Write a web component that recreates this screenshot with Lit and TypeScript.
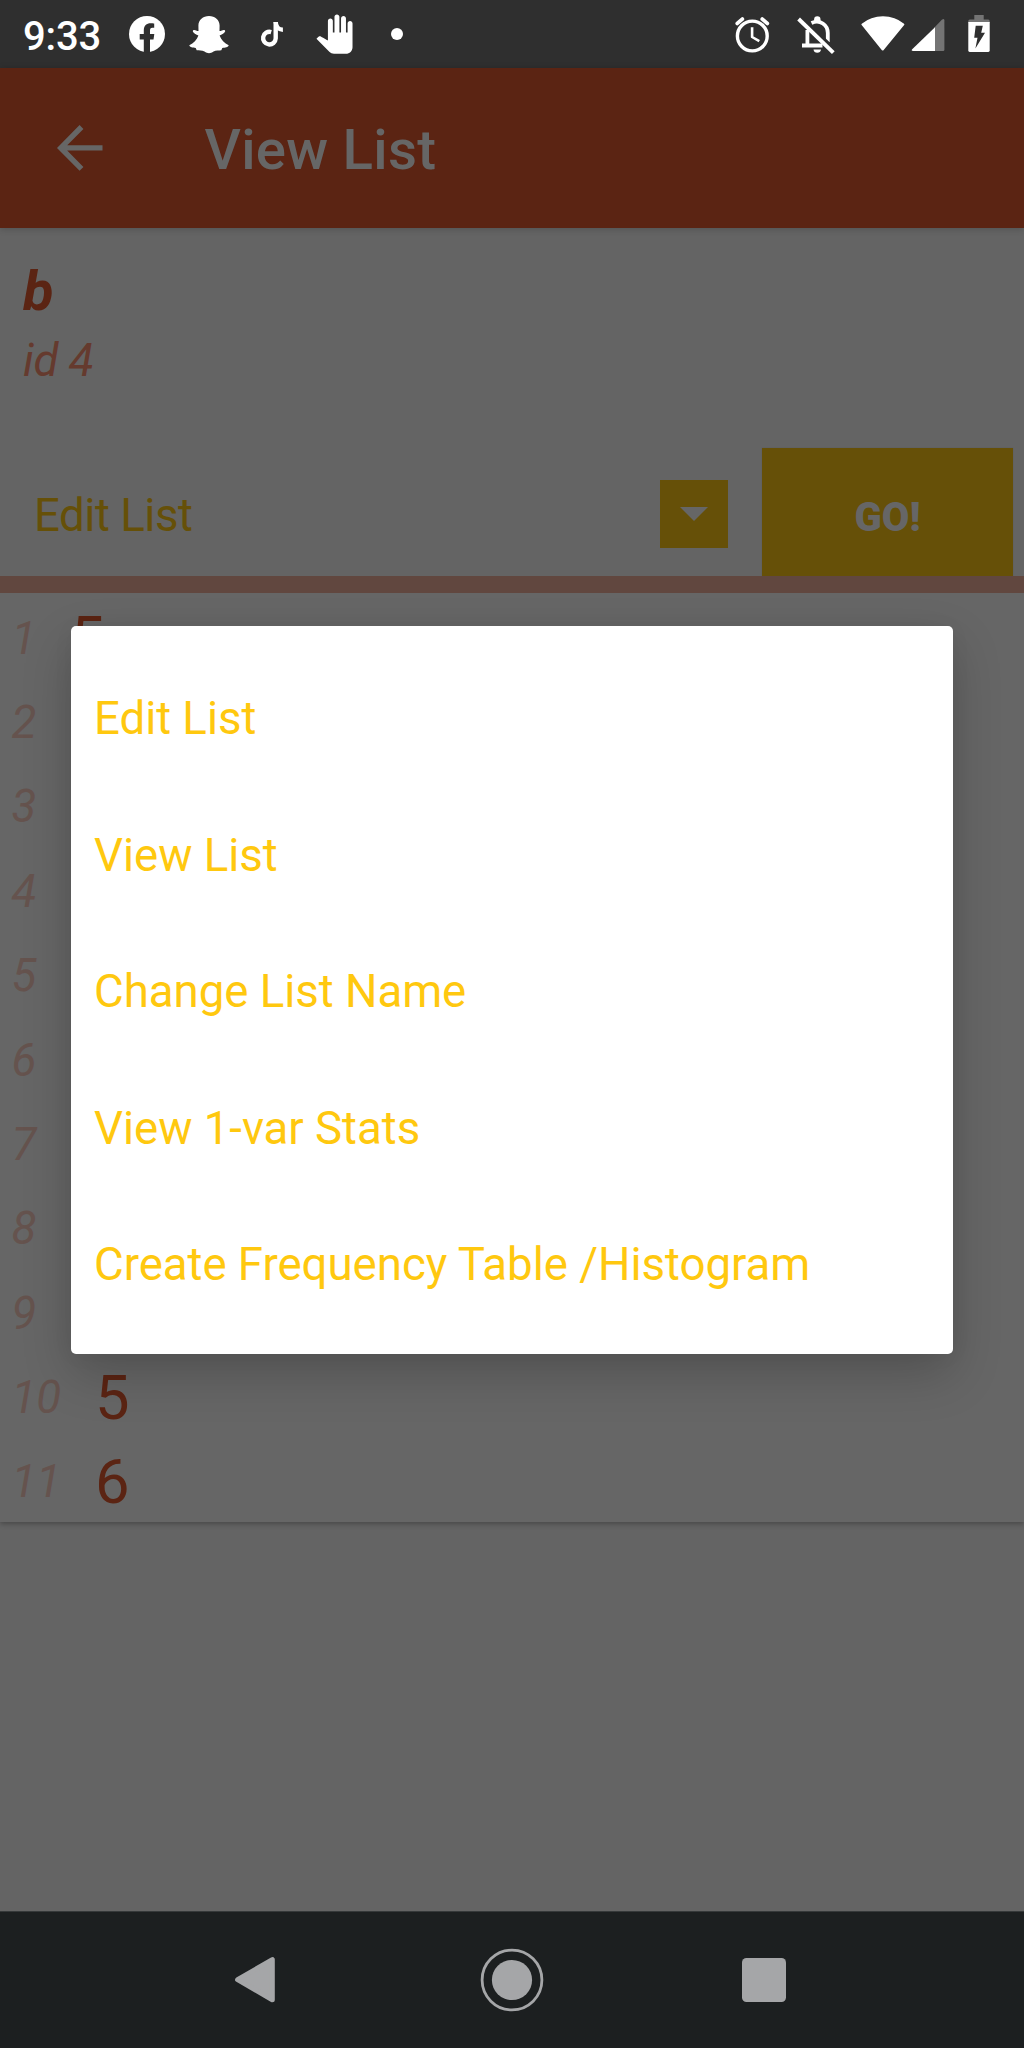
import { LitElement, html, css, svg } from "lit";
import { customElement, property } from "lit/decorators.js";

const glyphs = {
  facebook: svg`<circle r="18" fill="#fff"/><path fill="#2f2f2f" d="M-3.2 18.5V5.4H-7.3V0H-3.2V-3.5C-3.2-8.2-.4-10.7 3.6-10.7C5-10.7 6.4-10.5 7.2-10.4V-6.2H5.4C3.4-6.2 3-4.9 3-3.5V0H7.3L6.5 5.4H3V18.5Z"/>`,
  snapchat: svg`<path fill="#fff" d="M0-18C6-18 10.6-14 10.6-8.5L10.5-3C12.5-2.8 14-4.8 15.8-3.8C17-2.5 15.5-1 10.6 1.6C12 6 15.5 9.3 19.7 11.2C19.2 13.2 16 13.5 13.3 14L12.3 16.2C10 16.6 7 15.8 4.5 17.5C3 18.8 1.5 19.2 0 19.2C-1.5 19.2-3 18.8-4.5 17.5C-7 15.8-10 16.6-12.3 16.2L-13.3 14C-16 13.5-19.2 13.2-19.7 11.2C-15.5 9.3-12 6-10.6 1.6C-15.5-1-17-2.5-15.8-3.8C-14-4.8-12.5-2.8-10.5-3L-10.6-8.5C-10.6-14-6-18 0-18Z"/>`,
  tiktok: svg`<g fill="none" stroke="#fff" stroke-width="4.4"><path d="M-.8-1.9A6.3 6.3 0 1 0 3.7 4.4V-12"/><path d="M3.7-12C3.9-7.2 7.2-4.2 10.9-4.2"/></g>`,
  hand: svg`<path fill="#fff" transform="translate(-19.2 -19.6) scale(1.64)" d="M23 5.5V20c0 2.2-1.8 4-4 4h-7.3c-1.08 0-2.1-.43-2.85-1.19L1 14.83s1.26-1.23 1.3-1.25c.22-.19.49-.29.79-.29.22 0 .42.06.6.16.04.01 4.31 2.46 4.31 2.46V4c0-.83.67-1.5 1.5-1.5S11 3.17 11 4v7h1V1.5c0-.83.67-1.5 1.5-1.5S15 .67 15 1.5V11h1V2.5c0-.83.67-1.5 1.5-1.5s1.5.67 1.5 1.5V11h1V5.5c0-.83.67-1.5 1.5-1.5s1.5.67 1.5 1.5z"/>`,
  dot: svg`<circle r="6" fill="#fff"/>`,
  alarm: svg`<g fill="none" stroke="#fff" stroke-width="3.4"><circle cx="0.3" cy="2" r="14.9"/><path stroke-width="2.6" stroke-linejoin="round" d="M.1-6.7V3L7.3 7.2"/><path stroke-width="3.8" stroke-linecap="round" d="M-14.7-10.6L-9.7-14.9M15.3-10.6L10.3-14.9"/></g>`,
  bell: svg`<g fill="none" stroke="#fff" stroke-width="3.8"><path d="M-8.6-4V11.5M-14 11.5H6.5M-4.5-11C4-15 11.8-9 11.8-1V8"/><path stroke="#2f2f2f" stroke-width="3" d="M-15-17.5L19 15.5"/><path stroke-width="3.9" d="M-17.4-15L17.3 18.7"/></g><circle cx="1.3" cy="-14.6" r="3.2" fill="#fff"/><path fill="#fff" d="M-2.5 15.5H5A3.8 3.8 0 0 1-2.5 15.5Z"/>`,
  wifi: svg`<path fill="#fff" stroke="#fff" stroke-width="2" stroke-linejoin="round" d="M-.3 15.5L-20.6-9.6C-9-19.3 9-19.3 20.4-9.6Z"/>`,
  signal: svg`<path fill="#747474" d="M16.4 15.8Q16.4 17 15.2 17H6V-6L13.8-14.2Q16.4-16.2 16.4-13.5Z"/><path fill="#fff" d="M7-6.8V17H-14.9Q-17.2 17-15.8 15.3Z"/>`,
  battery: svg`<path fill="#747474" d="M-4.7-19H4.7V-14.5H9.2Q10.7-14.5 10.7-13V-11H-10.7V-13Q-10.7-14.5-9.2-14.5H-4.7Z"/><path fill="#fff" d="M-10.7-12H10.7V16.6Q10.7 18 9.3 18H-9.3Q-10.7 18-10.7 16.6Z"/><path fill="#2f2f2f" d="M-3.3-8.3H3.8L2.2-1.3H6L-3.6 14.6L-1.5 3.7H-4.8Z"/>`,
};

type GlyphName = keyof typeof glyphs;

@customElement("status-glyph")
class StatusGlyph extends LitElement {
  @property() name: GlyphName = "dot";

  static styles = css`
    :host { display: block; width: 48px; height: 48px; }
    .glyph { display: block; }
  `;

  render() {
    return html`<svg class="glyph" width="48" height="48" viewBox="-24 -24 48 48">${glyphs[this.name]}</svg>`;
  }
}

@customElement("option-menu")
class OptionMenu extends LitElement {
  @property({ attribute: false }) options: string[] = [];

  static styles = css`
    :host { display: block; }
    .menu {
      box-sizing: border-box;
      height: 728.3px;
      padding: 22.5px 0;
      border-radius: 5px;
      background: #fff;
      box-shadow: 0 20px 50px rgba(0, 0, 0, .2), 0 2px 22px rgba(0, 0, 0, .04);
    }
    .option {
      box-sizing: border-box;
      height: 136.5px;
      padding: 5px 0 0 23px;
      line-height: 132.5px;
      font-size: 45.6px;
      letter-spacing: -.03px;
      white-space: nowrap;
      color: #ffc80f;
    }
  `;

  render() {
    return html`<div class="menu" role="listbox">
      ${this.options.map((o) => html`<div class="option" role="option">${o}</div>`)}
    </div>`;
  }
}

@customElement("app-root")
class AppRoot extends LitElement {
  // Rows covered by the open menu carry no value.
  private values: (number | null)[] = [5, null, null, null, null, null, null, null, null, 5, 6];
  private options = [
    "Edit List",
    "View List",
    "Change List Name",
    "View 1-var Stats",
    "Create Frequency Table /Histogram",
  ];

  static styles = css`
    :host {
      display: block;
      font-family: Roboto, "Liberation Sans", sans-serif;
    }
    .screen {
      position: relative;
      display: flex;
      flex-direction: column;
      width: 1024px;
      height: 2048px;
      overflow: hidden;
      background: #646464;
    }
    .status {
      flex: none;
      display: flex;
      justify-content: space-between;
      align-items: center;
      height: 68px;
      padding: 0 21px 0 23px;
      box-sizing: border-box;
      background: #2f2f2f;
    }
    .left, .right { display: flex; align-items: center; }
    .time {
      width: 92.5px;
      padding-top: 5px;
      font-size: 40px;
      line-height: 64px;
      font-weight: 500;
      letter-spacing: -.2px;
      color: #fff;
    }
    .slot { display: flex; justify-content: center; width: 62.5px; }
    .right { gap: 16px; }
    .tight { margin-left: -18.5px; }
    .battery { margin-left: -13px; }
    .wifi { margin-left: 2.5px; }
    .appbar {
      flex: none;
      display: flex;
      align-items: center;
      box-sizing: border-box;
      height: 159.5px;
      background: #5b2413;
      box-shadow: 0 1px 7px rgba(0, 0, 0, .2);
    }
    .back { display: block; margin: 0 101.5px 0 56px; }
    .title {
      padding-top: 5px;
      font-size: 56.4px;
      line-height: 66px;
      font-weight: 500;
      letter-spacing: .25px;
      color: #666;
    }
    .heading {
      flex: none;
      box-sizing: border-box;
      height: 219.5px;
      padding: 30.5px 23px 0;
      font-style: italic;
    }
    .name { font-size: 56px; line-height: 66px; font-weight: 700; color: #5b2413; }
    .ident { margin-top: 9.5px; font-size: 45.6px; line-height: 54px; letter-spacing: -.35px; color: #653a2e; }
    .actions {
      flex: none;
      display: flex;
      align-items: center;
      height: 129px;
      padding: 0 11px 0 34px;
    }
    .selected {
      flex: 1;
      padding-top: 8px;
      font-size: 45.6px;
      line-height: 54px;
      letter-spacing: -.45px;
      color: #665008;
    }
    .arrow {
      display: flex;
      align-items: center;
      justify-content: center;
      width: 68px;
      height: 68px;
      margin: 5px 34px 0 0;
      background: #665008;
    }
    .go {
      align-self: flex-end;
      width: 251px;
      height: 128.4px;
      padding: 11px 0 0;
      border: 0;
      box-shadow: 0 0 1px rgba(0, 0, 0, .15);
      background: #665008;
      color: #666;
      font: 900 40px Roboto, "Liberation Sans", sans-serif;
    }
    .rule { flex: none; height: 17.4px; background: #61473f; position: relative; }
    .list {
      flex: none;
      background: #666;
      box-shadow: 0 2px 5px rgba(0, 0, 0, .28);
    }
    .row {
      display: flex;
      align-items: center;
      box-sizing: border-box;
      height: 84.4px;
      padding: 6px 0 0 11.4px;
      white-space: nowrap;
    }
    .index { font-size: 45.6px; line-height: 54px; font-style: italic; color: #65534e; }
    .value { margin-left: 34px; font-size: 61.5px; line-height: 72px; color: #5b2413; }
    .nav {
      flex: none;
      display: flex;
      align-items: center;
      justify-content: space-between;
      box-sizing: border-box;
      height: 137px;
      margin-top: auto;
      padding: 0 238px 0 234px;
      border-top: 1px solid #36393a;
      background: #1c1f20;
    }
    .home { margin-left: 5px; }
    .popup { position: absolute; left: 71px; top: 625.7px; width: 882px; }
  `;

  render() {
    return html`
      <main class="screen">
        <div class="status">
          <div class="left">
            <div class="time">9:33</div>
            ${(["facebook", "snapchat", "tiktok", "hand", "dot"] as GlyphName[]).map(
              (n) => html`<div class="slot"><status-glyph name=${n}></status-glyph></div>`,
            )}
          </div>
          <div class="right">
            <status-glyph name="alarm"></status-glyph>
            <status-glyph name="bell"></status-glyph>
            <status-glyph class="wifi" name="wifi"></status-glyph>
            <status-glyph class="tight" name="signal"></status-glyph>
            <status-glyph class="battery" name="battery"></status-glyph>
          </div>
        </div>
        <header class="appbar">
          <svg class="back" width="47" height="48" viewBox="56 124 47 48">
            <path fill="none" stroke="#666" stroke-width="5.4" d="M102.5 147.9H61M81.5 127L60.8 147.9L81.5 168.8"/>
          </svg>
          <div class="title">View List</div>
        </header>
        <section class="heading">
          <div class="name">b</div>
          <div class="ident">id 4</div>
        </section>
        <section class="actions">
          <div class="selected">Edit List</div>
          <div class="arrow">
            <svg width="28" height="14" viewBox="0 0 28 14"><path fill="#666" d="M0 0H28L14 14Z"/></svg>
          </div>
          <button class="go">GO!</button>
        </section>
        <div class="rule"></div>
        <section class="list">
          ${this.values.map(
            (v, i) => html`<div class="row">
              <span class="index">${i + 1}</span>${v === null ? "" : html`<span class="value">${v}</span>`}
            </div>`,
          )}
        </section>
        <nav class="nav">
          <svg width="42" height="48" viewBox="234 1956 42 48">
            <path fill="#a5a6a8" stroke="#a5a6a8" stroke-width="5" stroke-linejoin="round" d="M237.6 1979.7L272.3 1959.6V1999.8Z"/>
          </svg>
          <svg class="home" width="64" height="64" viewBox="-32 -32 64 64">
            <circle r="29.9" fill="none" stroke="#a5a6a8" stroke-width="2.8"/>
            <circle r="20.1" fill="#a5a6a8"/>
          </svg>
          <svg width="44" height="44" viewBox="0 0 44 44"><rect width="44" height="44" rx="4.5" fill="#a5a6a8"/></svg>
        </nav>
        <option-menu class="popup" .options=${this.options}></option-menu>
      </main>
    `;
  }
}
